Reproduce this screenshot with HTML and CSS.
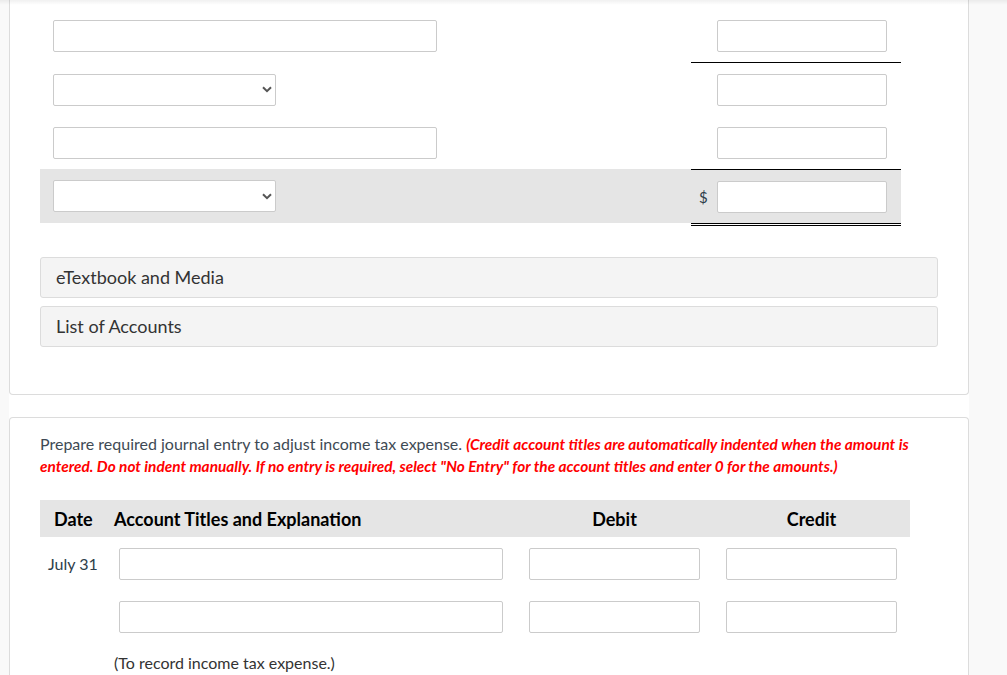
FILE: index.html
```html
<!DOCTYPE html>
<html>
<head>
<meta charset="utf-8">
<link rel="stylesheet" href="styles.css">
</head>
<body>
<div class="topshade"></div>
<div class="column">
  <section class="card card-top">
    <div class="worksheet">
      <div class="ws-row">
        <div class="ws-left"><input class="field field-wide" type="text"></div>
        <div class="ws-right rule-below"><span class="cur"></span><input class="field field-amt" type="text"></div>
      </div>
      <div class="ws-row">
        <div class="ws-left"><div class="select"><span class="chev"><svg width="10" height="7" viewBox="0 0 10 7"><path d="M1 1.2 L5 5.2 L9 1.2" fill="none" stroke="#555" stroke-width="2"/></svg></span></div></div>
        <div class="ws-right"><span class="cur"></span><input class="field field-amt" type="text"></div>
      </div>
      <div class="ws-row">
        <div class="ws-left"><input class="field field-wide" type="text"></div>
        <div class="ws-right rule-below"><span class="cur"></span><input class="field field-amt" type="text"></div>
      </div>
      <div class="ws-row ws-total">
        <div class="ws-left"><div class="select"><span class="chev"><svg width="10" height="7" viewBox="0 0 10 7"><path d="M1 1.2 L5 5.2 L9 1.2" fill="none" stroke="#555" stroke-width="2"/></svg></span></div></div>
        <div class="ws-right"><span class="cur">$</span><input class="field field-amt" type="text"></div>
      </div>
      <div class="double-rule"></div>
    </div>
    <div class="panels">
      <div class="panel">eTextbook and Media</div>
      <div class="panel">List of Accounts</div>
    </div>
  </section>

  <section class="card card-bottom">
    <p class="prompt">Prepare required journal entry to adjust income tax expense. <em class="note">(Credit account titles are automatically indented when the amount is entered. Do not indent manually. If no entry is required, select "No Entry" for the account titles and enter 0 for the amounts.)</em></p>
    <div class="journal">
      <div class="jh jh-date">Date</div>
      <div class="jh jh-acct">Account Titles and Explanation</div>
      <div class="jh jh-num">Debit</div>
      <div class="jh jh-num">Credit</div>

      <div class="jc jc-date">July 31</div>
      <div class="jc jc-acct"><input class="field" type="text"></div>
      <div class="jc jc-num"><input class="field" type="text"></div>
      <div class="jc jc-num"><input class="field" type="text"></div>

      <div class="jc jc-date"></div>
      <div class="jc jc-acct"><input class="field" type="text"></div>
      <div class="jc jc-num"><input class="field" type="text"></div>
      <div class="jc jc-num"><input class="field" type="text"></div>

      <div class="jc jc-date"></div>
      <div class="jc jc-acct jc-memo">(To record income tax expense.)</div>
      <div class="jc"></div>
      <div class="jc"></div>
    </div>
  </section>
</div>
</body>
</html>
```

FILE: styles.css
```css
* { box-sizing: border-box; }
html, body { margin: 0; padding: 0; }
body {
  background: #f9f9f9;
  font-family: Lato, "Open Sans", sans-serif;
  color: #333;
  width: 1007px;
  height: 675px;
  overflow: hidden;
  position: relative;
}
.topshade {
  position: absolute;
  left: 0; top: 0; right: 0;
  height: 5px;
  background: linear-gradient(rgba(0,0,0,0.06), rgba(0,0,0,0));
  z-index: 2;
}
.column {
  margin-left: 9px;
  width: 960px;
  background: #fff;
  height: 675px;
}
.card {
  border: 1px solid #dcdcdc;
  border-radius: 4px;
  background: #fff;
}
.card-top {
  border-top: none;
  border-radius: 0 0 4px 4px;
  padding: 9px 30px 47px 30px;
}
.card-bottom {
  margin-top: 22px;
  padding: 15px 30px 0 30px;
  border-bottom: none;
  border-radius: 4px 4px 0 0;
  height: 258px;
  overflow: hidden;
}
.worksheet { width: 861px; }
.ws-row {
  display: flex;
  height: 53px;
  align-items: stretch;
}
.ws-left {
  flex: 1;
  display: flex;
  align-items: center;
  padding-left: 13px;
}
.ws-right {
  width: 210px;
  display: flex;
  align-items: center;
  padding-right: 14px;
}
.rule-below { border-bottom: 1px solid #000; height: 54px; }
.ws-row:first-child { height: 54px; }
.ws-total { background: #e5e5e5; height: 54px; }
.ws-total .ws-right { border-top: 1px solid #000; }
.double-rule {
  margin-left: auto;
  width: 210px;
  height: 3px;
  border-top: 1px solid #000;
  border-bottom: 1px solid #000;
}
.cur {
  width: 26px;
  font-size: 15px;
  color: #2d3e4a;
  text-align: left;
  padding-left: 8px;
}
.field {
  display: block;
  height: 32px;
  border: 1px solid #cbcbcb;
  border-radius: 2px;
  background: #fff;
  margin: 0;
  padding: 0 6px;
  font: inherit;
  outline: none;
}
.field-wide { width: 384px; }
.field-amt { width: 170px; }
.select {
  width: 223px;
  height: 32px;
  border: 1px solid #cbcbcb;
  border-radius: 2px;
  background: #fff;
  display: flex;
  align-items: center;
  justify-content: flex-end;
  padding-right: 3px;
}
.chev { display: flex; width: 10px; height: 7px; }
.panels {
  margin-top: 31px;
  display: flex;
  flex-direction: column;
  gap: 8px;
  width: 898px;
}
.panel {
  height: 41px;
  background: #f4f4f4;
  border: 1px solid #dcdcdc;
  border-radius: 3px;
  padding-left: 15px;
  padding-bottom: 1px;
  display: flex;
  align-items: center;
  font-size: 18px;
  color: #333;
}
.prompt {
  margin: 0;
  font-size: 16px;
  line-height: 22px;
  color: #3e4a54;
  width: 880px;
}
.note {
  color: #f00;
  font-weight: 700;
  font-style: italic;
  font-size: 15.4px;
}
.journal {
  margin-top: 23px;
  width: 870px;
  display: grid;
  grid-template-columns: 70px 406px 197px 197px;
}
.jh {
  background: #e5e5e5;
  height: 37px;
  display: flex;
  align-items: center;
  font-weight: 700;
  font-size: 18px;
  color: #000;
}
.jh-date { padding-left: 14px; }
.jh-acct { padding-left: 4px; }
.jh-num { justify-content: center; }
.jc {
  height: 53px;
  padding-top: 11px;
  font-size: 16px;
}
.jc .field { width: 100%; }
.jc-date { padding-left: 8px; line-height: 32px; color: #2d3e4a; }
.jc-acct { padding-left: 9px; padding-right: 13px; }
.jc-num { padding-left: 13px; padding-right: 13px; }
.jc-memo { padding-left: 4px; padding-top: 10px; line-height: 20px; color: #333; }
```
